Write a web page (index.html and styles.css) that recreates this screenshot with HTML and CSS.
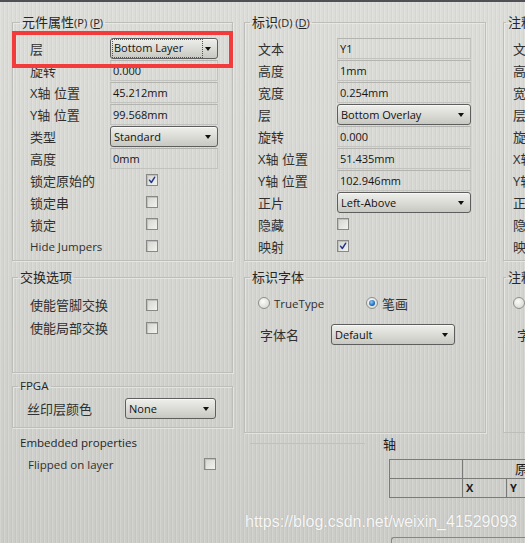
FILE: index.html
```html
<!DOCTYPE html>
<html lang="zh-CN">
<head>
<meta charset="utf-8">
<title>元件属性</title>
<link rel="stylesheet" href="styles.css">
</head>
<body>
<div class="screen">
  <div class="col1">
    <fieldset class="grp g-props">
      <legend class="lg-a">元件属性<span class="mn">(P) (<u>P</u>)</span></legend>
      <div class="row"><span class="lbl">层</span><div class="dd w1"><span class="focus">Bottom Layer</span></div></div>
      <div class="row"><span class="lbl">旋转</span><div class="tf w1">0.000</div></div>
      <div class="row"><span class="lbl">X轴 位置</span><div class="tf w1">45.212mm</div></div>
      <div class="row"><span class="lbl">Y轴 位置</span><div class="tf w1">99.568mm</div></div>
      <div class="row"><span class="lbl">类型</span><div class="dd w1">Standard</div></div>
      <div class="row"><span class="lbl">高度</span><div class="tf w1">0mm</div></div>
      <div class="row"><span class="lbl">锁定原始的</span><span class="cb on c1"><svg viewBox="0 0 12 12"><path d="M3 6.2 L5.2 9 L9.3 2.6"/></svg></span></div>
      <div class="row"><span class="lbl">锁定串</span><span class="cb c1"></span></div>
      <div class="row"><span class="lbl">锁定</span><span class="cb c1"></span></div>
      <div class="row"><span class="lbl en">Hide Jumpers</span><span class="cb c1"></span></div>
    </fieldset>

    <fieldset class="grp g-swap">
      <legend class="lg-b">交换选项</legend>
      <div class="row r23"><span class="lbl wide">使能管脚交换</span><span class="cb"></span></div>
      <div class="row r23"><span class="lbl wide">使能局部交换</span><span class="cb"></span></div>
    </fieldset>

    <fieldset class="grp g-fpga">
      <legend class="lg-b en">FPGA</legend>
      <div class="row"><span class="lbl">丝印层颜色</span><div class="dd">None</div></div>
    </fieldset>

    <fieldset class="grp g-emb">
      <legend class="lg-b en">Embedded properties</legend>
      <div class="row"><span class="lbl en">Flipped on layer</span><span class="cb"></span></div>
    </fieldset>
  </div>

  <div class="right">
    <div class="toprow">
      <div class="col2">
        <fieldset class="grp g-id">
          <legend class="lg-c">标识<span class="mn">(D) (<u>D</u>)</span></legend>
          <div class="row"><span class="lbl">文本</span><div class="tf">Y1</div></div>
          <div class="row"><span class="lbl">高度</span><div class="tf">1mm</div></div>
          <div class="row"><span class="lbl">宽度</span><div class="tf">0.254mm</div></div>
          <div class="row"><span class="lbl">层</span><div class="dd">Bottom Overlay</div></div>
          <div class="row"><span class="lbl">旋转</span><div class="tf">0.000</div></div>
          <div class="row"><span class="lbl">X轴 位置</span><div class="tf">51.435mm</div></div>
          <div class="row"><span class="lbl">Y轴 位置</span><div class="tf">102.946mm</div></div>
          <div class="row"><span class="lbl">正片</span><div class="dd">Left-Above</div></div>
          <div class="row"><span class="lbl">隐藏</span><span class="cb"></span></div>
          <div class="row"><span class="lbl">映射</span><span class="cb on"><svg viewBox="0 0 12 12"><path d="M3 6.2 L5.2 9 L9.3 2.6"/></svg></span></div>
        </fieldset>
        <fieldset class="grp g-font">
          <legend class="lg-c">标识字体</legend>
          <div class="row radios">
            <label class="ritem first"><span class="rb"></span><span class="en">TrueType</span></label>
            <label class="ritem"><span class="rb sel"></span><span class="lbl-t">笔画</span></label>
          </div>
          <div class="row fontrow"><span class="lbl">字体名</span><div class="dd">Default</div></div>
        </fieldset>
      </div>

      <div class="col3">
        <fieldset class="grp g-id">
          <legend class="lg-d">注释</legend>
          <div class="row"><span class="lbl">文本</span></div>
          <div class="row"><span class="lbl">高度</span></div>
          <div class="row"><span class="lbl">宽度</span></div>
          <div class="row"><span class="lbl">层</span></div>
          <div class="row"><span class="lbl">旋转</span></div>
          <div class="row"><span class="lbl">X轴</span></div>
          <div class="row"><span class="lbl">Y轴</span></div>
          <div class="row"><span class="lbl">正片</span></div>
          <div class="row"><span class="lbl">隐藏</span></div>
          <div class="row"><span class="lbl">映射</span></div>
        </fieldset>
        <fieldset class="grp g-font">
          <legend class="lg-d">注释</legend>
          <div class="row radios">
            <span class="rb"></span>
          </div>
          <div class="row fontrow c3"><span class="lbl">字</span></div>
        </fieldset>
      </div>
    </div>

    <div class="axis">
      <div class="axis-line"></div>
      <div class="axis-main">
        <div class="axis-title">轴</div>
        <div class="tbl">
          <div class="cell"></div>
          <div class="cell hd">原</div>
          <div class="cell"></div>
          <div class="cell xy">X</div>
          <div class="cell xy">Y</div>
        </div>
        <div class="axis-next"></div>
      </div>
    </div>
  </div>
</div>

<div class="redbox"></div>
<div class="watermark">https://blog.csdn.net/weixin_41529093</div>
</body>
</html>
```

FILE: styles.css
```css
* { box-sizing: border-box; }
html, body { margin: 0; padding: 0; }
body {
  width: 525px;
  height: 543px;
  overflow: hidden;
  position: relative;
  background-color: #d4d5d0;
  background-image:
    repeating-linear-gradient(90deg, rgba(255,255,255,0.16) 0 1px, rgba(0,0,0,0) 1px 3px, rgba(0,0,0,0.03) 3px 4px),
    linear-gradient(#dcddd8, #d4d5d0 50%, #cbccc7);
  font-family: "Open Sans", "Noto Sans CJK SC", sans-serif;
  font-size: 11px;
  color: #1c1c1c;
}
.screen {
  border-top: 2px solid #505156;
  display: flex;
  height: 543px;
}
.col1 { width: 244px; flex: none; }
.right { width: 281px; flex: none; overflow: hidden; }
.toprow { display: flex; }
.col2 { width: 259px; flex: none; }
.col3 { width: 22px; flex: none; overflow: hidden; }

/* group boxes */
.grp {
  margin: 0;
  padding: 0;
  min-width: 0;
  border: 1px solid #bdbeb9;
  box-shadow: inset 1px 1px 0 rgba(240,240,236,0.6), 1px 1px 0 rgba(240,240,236,0.6);
}
legend {
  padding: 0 2px;
  height: 16px;
  line-height: 16px;
  font-size: 13px;
  color: #262626;
  white-space: nowrap;
}
legend.en { font-size: 11.5px; }
.lg-a { margin-left: 7px; }
.lg-b { margin-left: 5px; }
.lg-c { margin-left: 5px; }
.lg-d { margin-left: 2px; }
.mn { font-size: 11px; line-height: 1; }

.g-props { margin: 12px 0 0 12px; width: 221px; padding: 7px 0 3px; }
.g-swap { margin: 8px 0 0 12px; width: 221px; padding: 8px 0 33px; }
.g-fpga { margin: 5px 0 0 12px; width: 221px; padding: 3px 0 8px; }
.g-emb { margin: 7px 0 0 12px; width: 221px; padding: 2px 0 0; border-color: transparent; box-shadow: none; }

.col2 .g-id { margin: 12px 0 0 0; width: 242px; padding: 7px 0 3px; }
.col2 .g-font { margin: 8px 0 0 0; width: 242px; padding: 7px 0 87px; }
.col3 .g-id { margin: 12px 0 0 0; width: 40px; padding: 7px 0 3px; }
.col3 .g-font { margin: 8px 0 0 0; width: 40px; padding: 7px 0 87px; }

/* rows */
.row {
  display: flex;
  align-items: center;
  height: 22px;
}
.row.r23 { height: 23px; }
.lbl {
  flex: none;
  font-size: 13px;
  color: #303030;
  white-space: nowrap;
}
.lbl.en, .en { font-size: 11.5px; }

.g-props .row, .g-swap .row { padding-left: 17px; }
.g-props .lbl { width: 80px; }
.g-swap .lbl { width: 116px; }
.g-fpga .row { padding-left: 14px; }
.g-fpga .lbl { width: 98px; }
.g-fpga .dd { width: 91px; }
.g-emb .row { padding-left: 15px; }
.g-emb .lbl { width: 176px; }

.col2 .g-id .row { padding-left: 13px; }
.col3 .g-id .row { padding-left: 9px; }
.g-id .lbl { width: 79px; }
.g-id .tf, .g-id .dd { width: 134px; }

/* fields */
.tf {
  flex: none;
  height: 21px;
  line-height: 19px;
  padding-left: 2px;
  border: 1px solid #c2c3be;
  border-top-color: #b3b4af;
  color: #151515;
  white-space: nowrap;
}
.w1 { width: 108px; }
.dd {
  flex: none;
  position: relative;
  height: 21px;
  line-height: 19px;
  padding-left: 3px;
  border: 1px solid #5e5e5e;
  border-radius: 3px;
  background: linear-gradient(#eeeeea, #dcdcd7 50%, #c8c8c3);
  box-shadow: inset 0 1px 0 #f8f8f5;
  color: #111;
  white-space: nowrap;
}
.dd::after {
  content: "";
  position: absolute;
  right: 6px;
  top: 8px;
  border-left: 3.5px solid transparent;
  border-right: 3.5px solid transparent;
  border-top: 4px solid #111;
}
.focus {
  display: block;
  margin: 1px 0 1px -1px;
  width: 89px;
  height: 17px;
  line-height: 15px;
  padding-left: 1px;
  outline: 1px dotted #555;
}

/* checkbox */
.cb {
  flex: none;
  width: 12px;
  height: 12px;
  border: 1px solid #888886;
  background: linear-gradient(135deg, #d3d3cf, #f2f2ef);
  box-shadow: inset 1px 1px 0 #c0c0bc;
  display: inline-flex;
}
.cb.c1 { margin-left: 36px; }
.cb svg { width: 10px; height: 10px; }
.cb svg path {
  fill: none;
  stroke: #23348a;
  stroke-width: 1.7;
  stroke-linecap: round;
  stroke-linejoin: round;
}

/* radios */
.col2 .radios { padding-left: 13px; }
.col3 .radios { padding-left: 9px; }
.ritem { display: flex; align-items: center; gap: 4px; color: #303030; }
.ritem.first { width: 108px; }
.lbl-t { font-size: 13px; }
.rb {
  flex: none;
  position: relative;
  width: 12px;
  height: 12px;
  border-radius: 50%;
  border: 1px solid #8d8d8b;
  background: radial-gradient(circle at 40% 35%, #fbfbf9, #cfcfcb);
}
.rb.sel::after {
  content: "";
  position: absolute;
  left: 2px;
  top: 2px;
  width: 6px;
  height: 6px;
  border-radius: 50%;
  background: radial-gradient(circle at 40% 35%, #8cc8f7, #0d5fb4 70%);
}

.fontrow { margin-top: 9px; }
.col2 .fontrow { padding-left: 15px; }
.col3 .fontrow { padding-left: 13px; }
.col2 .fontrow .lbl { width: 71px; }
.fontrow .dd { width: 124px; }

/* axis section */
.axis { display: flex; margin-top: 3px; }
.axis-line {
  flex: none;
  width: 115px;
  height: 8px;
  margin-left: 6px;
  border-bottom: 1px solid #c0c1bc;
}
.axis-main { margin-left: 18px; flex: none; width: 142px; }
.axis-title { line-height: 16px; font-size: 13px; color: #1c1c1c; }
.tbl {
  margin: 7px 0 0 6px;
  display: grid;
  grid-template-columns: 73px 44px 30px;
  grid-auto-rows: 19px;
  border-top: 1px solid #7a7a78;
  border-left: 1px solid #7a7a78;
}
.cell {
  border-right: 1px solid #7a7a78;
  border-bottom: 1px solid #7a7a78;
  line-height: 18px;
  color: #1c1c1c;
}
.hd { grid-column: span 2; padding-left: 52px; font-size: 13px; border-right: none; }
.xy { padding-left: 3px; font-weight: bold; }
.xy:last-child { border-right: none; }
.axis-next {
  margin: 39px 0 0 8px;
  width: 200px;
  height: 20px;
  border: 1px solid #858583;
  border-bottom: none;
  border-right: none;
  border-radius: 3px 0 0 0;
}

/* overlays */
.redbox {
  position: absolute;
  left: 12px;
  top: 31px;
  width: 221px;
  height: 37px;
  border: 4px solid #f23c3c;
}
.watermark {
  position: absolute;
  left: 245px;
  top: 512px;
  font-family: "Liberation Sans", Arial, sans-serif;
  font-size: 16px;
  line-height: 20px;
  color: rgba(255,255,255,0.92);
  text-shadow: 0 0 1px rgba(120,120,120,0.4);
  white-space: nowrap;
}
```
